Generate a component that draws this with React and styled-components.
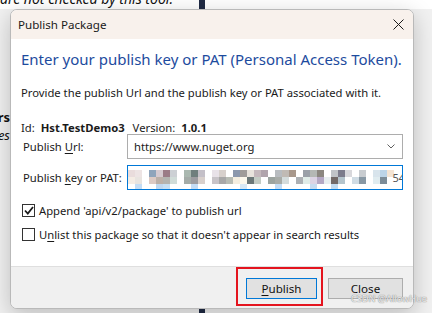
import React from 'react'
import styled, { createGlobalStyle } from 'styled-components'

const GlobalStyle = createGlobalStyle`
  body {
    margin: 0;
    background: #ffffff;
    font-family: "Noto Sans", "Open Sans", sans-serif;
  }
`

const Page = styled.div`
  position: relative;
  width: 432px;
  height: 313px;
  overflow: hidden;
  background:
    linear-gradient(to right, transparent 199px, #1f2a44 199px, #1f2a44 205px, transparent 205px),
    linear-gradient(to bottom, #ffffff 0, #ffffff 9px, #f1f1f1 9px);
`

const BackdropText = styled.div`
  font-style: italic;
  font-size: 14px;
  line-height: 16px;
  margin-top: -9px;
  color: #111;
  white-space: nowrap;
`

const BackdropEdge = styled.div`
  width: 10px;
  display: flex;
  flex-direction: column;
  align-items: flex-end;
  overflow: hidden;
  margin-top: 103px;
  gap: 3px;
`

const EdgeWord = styled.div`
  font-size: 13px;
  line-height: 15px;
  white-space: nowrap;
  color: #111;
  font-weight: ${p => (p.$bold ? 700 : 400)};
  font-style: ${p => (p.$italic ? 'italic' : 'normal')};
`

const Dialog = styled.div`
  position: absolute;
  left: 10px;
  top: 9px;
  width: 404px;
  height: 300px;
  box-sizing: border-box;
  border-radius: 7px;
  overflow: hidden;
  display: flex;
  flex-direction: column;
  background: #ffffff;
  border: 1px solid #b9b9b9;
  box-shadow: 0 6px 22px rgba(0, 0, 0, 0.22);
`

const TitleBar = styled.div`
  height: 29px;
  flex: none;
  display: flex;
  align-items: center;
  justify-content: space-between;
  padding: 0 9px 0 7px;
  background: #f8f1ec;
  font-size: 11.6px;
  color: #1a1a1a;
`

const Body = styled.div`
  flex: 1;
  display: flex;
  flex-direction: column;
  padding: 0 10px;
  font-size: 11.25px;
  color: #1a1a1a;
`

const Heading = styled.div`
  margin-top: 10px;
  font-size: 15px;
  line-height: 20px;
  color: #1d4b9e;
  white-space: nowrap;
`

const Note = styled.div`
  margin-top: 16px;
  line-height: 16px;
  white-space: nowrap;
`

const IdRow = styled.div`
  margin-top: 19px;
  height: 14px;
  display: flex;
  align-items: center;
  white-space: nowrap;
`

const Key = styled.span`
  margin-right: 6px;
`

const Value = styled.b`
  font-weight: 700;
  margin-right: 8px;
`

const Form = styled.div`
  display: grid;
  grid-template-columns: 106px 1fr;
  row-gap: 6px;
  align-items: center;
`

const Label = styled.div`
  padding-left: 2px;
  white-space: nowrap;
  u { text-underline-offset: 2px; }
`

const Field = styled.div`
  position: relative;
  height: 25px;
  box-sizing: border-box;
  border: 1px solid ${p => (p.$focus ? '#0078d7' : '#adadad')};
  display: flex;
  align-items: center;
  justify-content: space-between;
  padding: 0 7px 0 6px;
  overflow: hidden;
  background: #fff;
`

const Tail = styled.span`
  position: absolute;
  right: -3px;
  top: 4px;
  color: #555;
  font-size: 11px;
`

const Checks = styled.div`
  margin-top: 12px;
  display: flex;
  flex-direction: column;
  gap: 8px;
`

const CheckRow = styled.label`
  display: flex;
  align-items: center;
  height: 16px;
  padding-left: 1px;
  white-space: pre;
  u { text-underline-offset: 2px; }
`

const Box = styled.span`
  width: 13px;
  height: 13px;
  box-sizing: border-box;
  border: 1px solid #333;
  background: #fff;
  display: flex;
  align-items: center;
  justify-content: center;
  margin-right: 4px;
`

const Footer = styled.div`
  height: 42px;
  box-sizing: border-box;
  flex: none;
  border-top: 1px solid #dfdfdf;
  background: #f0f0f0;
  display: flex;
  justify-content: flex-end;
  align-items: flex-start;
  gap: 11px;
  padding: 11px 10px 0 0;
`

const Button = styled.div`
  width: ${p => p.$w}px;
  height: 21px;
  box-sizing: border-box;
  border: 1px solid ${p => (p.$primary ? '#0078d7' : '#adadad')};
  background: #e1e1e1;
  display: flex;
  align-items: center;
  justify-content: center;
  font-size: 11.6px;
  color: #111;
  u { text-underline-offset: 2px; }
`

const Highlight = styled.div`
  position: absolute;
  left: 236px;
  top: 267px;
  width: 87px;
  height: 39px;
  box-sizing: border-box;
  border: 2px solid #e4141e;
`

const Watermark = styled.div`
  position: absolute;
  right: 5px;
  top: 293px;
  font-size: 9.2px;
  line-height: 12px;
  color: rgba(255, 255, 255, 0.85);
  text-shadow: 0 0 1px #8a8a8a, 0 0 1px #8a8a8a;
  white-space: nowrap;
`

const mosaicColors = [
  ['#e9dcdc', '#ede4e4', '#fff', '#8fa4bb', '#d6cad0', '#9b7b86', '#ccd0d4', '#fff', '#aab8b0', '#6f7f7d', '#c4c0c8', '#fff', '#e8e2e8', '#d7d0cc', '#fff', '#8c98ad', '#a09c9a', '#e8e3dc', '#c4b8bc', '#b0a4ac', '#fff', '#b8bcc0', '#c0bab4', '#a8988c', '#fff', '#9aa0a8', '#b4b8b4', '#8c8780', '#fff', '#c0c4c8', '#7c7c8c', '#d8d8dc', '#fff', '#c8ccd0', '#fff', '#d8e4ec', '#bcd4e8', '#f4e4d4', '#fff'],
  ['#f4ece4', '#e8e4e0', '#fff', '#dccac4', '#bcb0a8', '#b4b4b0', '#d0dcd8', '#fff', '#a4aca8', '#9c9ca0', '#d8d0cc', '#fff', '#c8c4c8', '#a8a8a8', '#b8bcb4', '#f4eee0', '#fcf8ec', '#6c7878', '#c4ccc4', '#fff', '#9ca4a0', '#a8aca8', '#d4dcdc', '#fff', '#acb0b4', '#e0ece8', '#dcd4e4', '#b4a8c4', '#e8eef0', '#726a68', '#b4c4cc', '#fff', '#d0dce4', '#8898a4', '#fff', '#e0ecf0', '#7c8c98', '#fff', '#fff'],
  ['#fff', '#c4dcf4', '#fff', '#fff', '#c0d8f0', '#c8e0f4', '#fff', '#fff', '#fff', '#c4dcf4', '#fff', '#fff', '#fff', '#fff', '#fff', '#fff', '#d8e8f4', '#fff', '#fff', '#fff', '#fff', '#c4dcf4', '#fff', '#fff', '#fff', '#fff', '#c8dcf0', '#fff', '#fff', '#c4dcf0', '#fff', '#fff', '#fff', '#fff', '#fff', '#fff', '#fff', '#fff', '#fff'],
]

function Mosaic() {
  const cell = 7
  return (
    <svg width="272" height="21" style={{ position: 'absolute', left: 0, top: 4 }}>
      {mosaicColors.map((row, r) =>
        row.map((c, i) => <rect key={r + '-' + i} x={i * cell} y={r * cell} width={cell} height={cell} fill={c} />)
      )}
    </svg>
  )
}

function CloseIcon() {
  return (
    <svg width="11" height="11" viewBox="0 0 11 11">
      <path d="M0.5 0.5 L10.5 10.5 M10.5 0.5 L0.5 10.5" stroke="#1a1a1a" strokeWidth="1" />
    </svg>
  )
}

function Chevron() {
  return (
    <svg width="8" height="5" viewBox="0 0 8 5">
      <path d="M0.5 0.5 L4 4 L7.5 0.5" fill="none" stroke="#606060" strokeWidth="1" />
    </svg>
  )
}

function Tick() {
  return (
    <svg width="10" height="9" viewBox="0 0 10 9">
      <path d="M1 4.5 L3.8 7.5 L9 1" fill="none" stroke="#1a1a1a" strokeWidth="1.8" />
    </svg>
  )
}

export default function App() {
  return (
    <>
      <GlobalStyle />
      <Page>
        <BackdropText>are not checked by this tool.</BackdropText>
        <BackdropEdge>
          <EdgeWord $bold>Publishers</EdgeWord>
          <EdgeWord $italic>Properties</EdgeWord>
        </BackdropEdge>

        <Dialog>
          <TitleBar>
            <span>Publish Package</span>
            <CloseIcon />
          </TitleBar>
          <Body>
            <Heading>Enter your publish key or PAT (Personal Access Token).</Heading>
            <Note>Provide the publish Url and the publish key or PAT associated with it.</Note>
            <IdRow>
              <Key>Id:</Key>
              <Value>Hst.TestDemo3</Value>
              <Key>Version:</Key>
              <Value>1.0.1</Value>
            </IdRow>
            <Form>
              <Label>Publish <u>U</u>rl:</Label>
              <Field>
                <span>https://www.nuget.org</span>
                <Chevron />
              </Field>
              <Label>Publish <u>k</u>ey or PAT:</Label>
              <Field $focus>
                <Mosaic />
                <Tail>54</Tail>
              </Field>
            </Form>
            <Checks>
              <CheckRow>
                <Box><Tick /></Box>
                <span>Append 'api/v2/package' to publish url</span>
              </CheckRow>
              <CheckRow>
                <Box />
                <span>U<u>n</u>list this package so that it doesn't appear in search results</span>
              </CheckRow>
            </Checks>
          </Body>
          <Footer>
            <Button $primary $w={71}><span><u>P</u>ublish</span></Button>
            <Button $w={75}>Close</Button>
          </Footer>
        </Dialog>

        <Highlight />
        <Watermark>CSDN @AllowHue</Watermark>
      </Page>
    </>
  )
}
